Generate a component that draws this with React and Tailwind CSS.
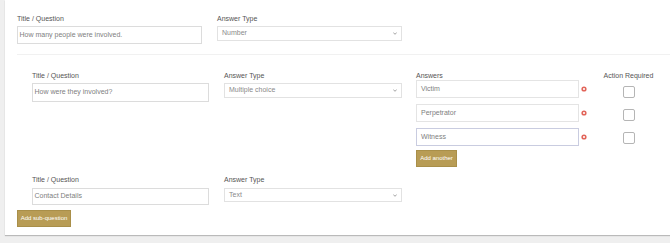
import React from 'react';

const Label = ({ children, className = '' }) => (
  <div className={`h-[8px] text-[7px] leading-[8px] text-[#555] whitespace-nowrap ${className}`}>{children}</div>
);

const TextInput = ({ value, className = '' }) => (
  <div
    className={`flex items-center border border-[#dcdcdc] bg-white pl-[1.5px] text-[7px] text-[#808080] whitespace-nowrap ${className}`}
  >
    {value}
  </div>
);

const SelectBox = ({ value, className = '' }) => (
  <div
    className={`flex items-center justify-between border border-[#e2e2e2] bg-white pl-[4px] pr-[4px] text-[7px] text-[#8a8a8a] ${className}`}
  >
    <span>{value}</span>
    <svg width="4" height="3" viewBox="0 0 4 3">
      <path d="M0.3 0.5 L2 2.3 L3.7 0.5" fill="none" stroke="#999" strokeWidth="0.9" />
    </svg>
  </div>
);

const CloseIcon = () => (
  <svg width="6" height="6" viewBox="0 0 6 6" className="shrink-0">
    <circle cx="3" cy="3" r="2.6" fill="#e2655a" />
    <path d="M2 2 L4 4 M4 2 L2 4" stroke="#fff" strokeWidth="0.8" />
  </svg>
);

const Checkbox = () => (
  <div className="h-[12px] w-[12px] rounded-[2px] border border-[#b5b5b5] bg-white" />
);

const GoldButton = ({ children, className = '' }) => (
  <button
    className={`flex h-[17px] items-center justify-center border border-[#a98f49] bg-[#b89c55] text-[6px] text-white whitespace-nowrap ${className}`}
  >
    {children}
  </button>
);

const answers = [
  { text: 'Victim', border: 'border-[#e4e4e4]' },
  { text: 'Perpetrator', border: 'border-[#e4e4e4]' },
  { text: 'Witness', border: 'border-[#c9cce0]' }
];

export default function App() {
  return (
    <div className="h-[243px] w-[670px] overflow-hidden bg-[#efefef] pl-[5px] font-['Liberation_Sans',Arial,sans-serif]">
      <div className="h-[235px] bg-white pl-[12px] pt-[15px] shadow-[0_1px_1px_rgba(0,0,0,0.22)]">
        {/* Main question */}
        <div className="flex gap-[15px]">
          <div className="w-[185px]">
            <Label className="mb-[3px]">Title / Question</Label>
            <TextInput value="How many people were involved." className="h-[18px]" />
          </div>
          <div className="w-[185px]">
            <Label className="mb-[3px]">Answer Type</Label>
            <SelectBox value="Number" className="h-[15px]" />
          </div>
        </div>

        <div className="mt-[10px] h-px bg-[#f1f1f1]" />

        {/* Sub-question: multiple choice */}
        <div className="mt-[17px] flex pl-[15px]">
          <div className="w-[177px]">
            <Label className="mb-[3px]">Title / Question</Label>
            <TextInput value="How were they involved?" className="h-[19px] text-[#6a6a6a]" />
          </div>
          <div className="ml-[15px] w-[178px]">
            <Label className="mb-[3px]">Answer Type</Label>
            <SelectBox value="Multiple choice" className="h-[15px]" />
          </div>
          <div className="ml-[14px]">
            <Label>Answers</Label>
            <div className="flex flex-col gap-[6px]">
              {answers.map((a) => (
                <div key={a.text} className="flex items-center">
                  <div
                    className={`flex h-[18px] w-[163px] items-center border ${a.border} pl-[4px] text-[7px] text-[#808080]`}
                  >
                    {a.text}
                  </div>
                  <div className="ml-[2px]">
                    <CloseIcon />
                  </div>
                </div>
              ))}
            </div>
            <GoldButton className="mt-[4px] w-[41px]">Add another</GoldButton>
          </div>
          <div className="ml-[17px] flex w-[49px] flex-col items-center">
            <Label>Action Required</Label>
            <div className="mt-[6px] flex flex-col gap-[11px]">
              <Checkbox />
              <Checkbox />
              <Checkbox />
            </div>
          </div>
        </div>

        {/* Sub-question: text */}
        <div className="mt-[9px] flex pl-[15px]">
          <div className="w-[177px]">
            <Label className="mb-[4px]">Title / Question</Label>
            <TextInput value="Contact Details" className="h-[17px] text-[#8a8a8a]" />
          </div>
          <div className="ml-[15px] w-[178px]">
            <Label className="mb-[4px]">Answer Type</Label>
            <SelectBox value="Text" className="h-[14px]" />
          </div>
        </div>

        <GoldButton className="mt-[5px] w-[54px]">Add sub-question</GoldButton>
      </div>
    </div>
  );
}
